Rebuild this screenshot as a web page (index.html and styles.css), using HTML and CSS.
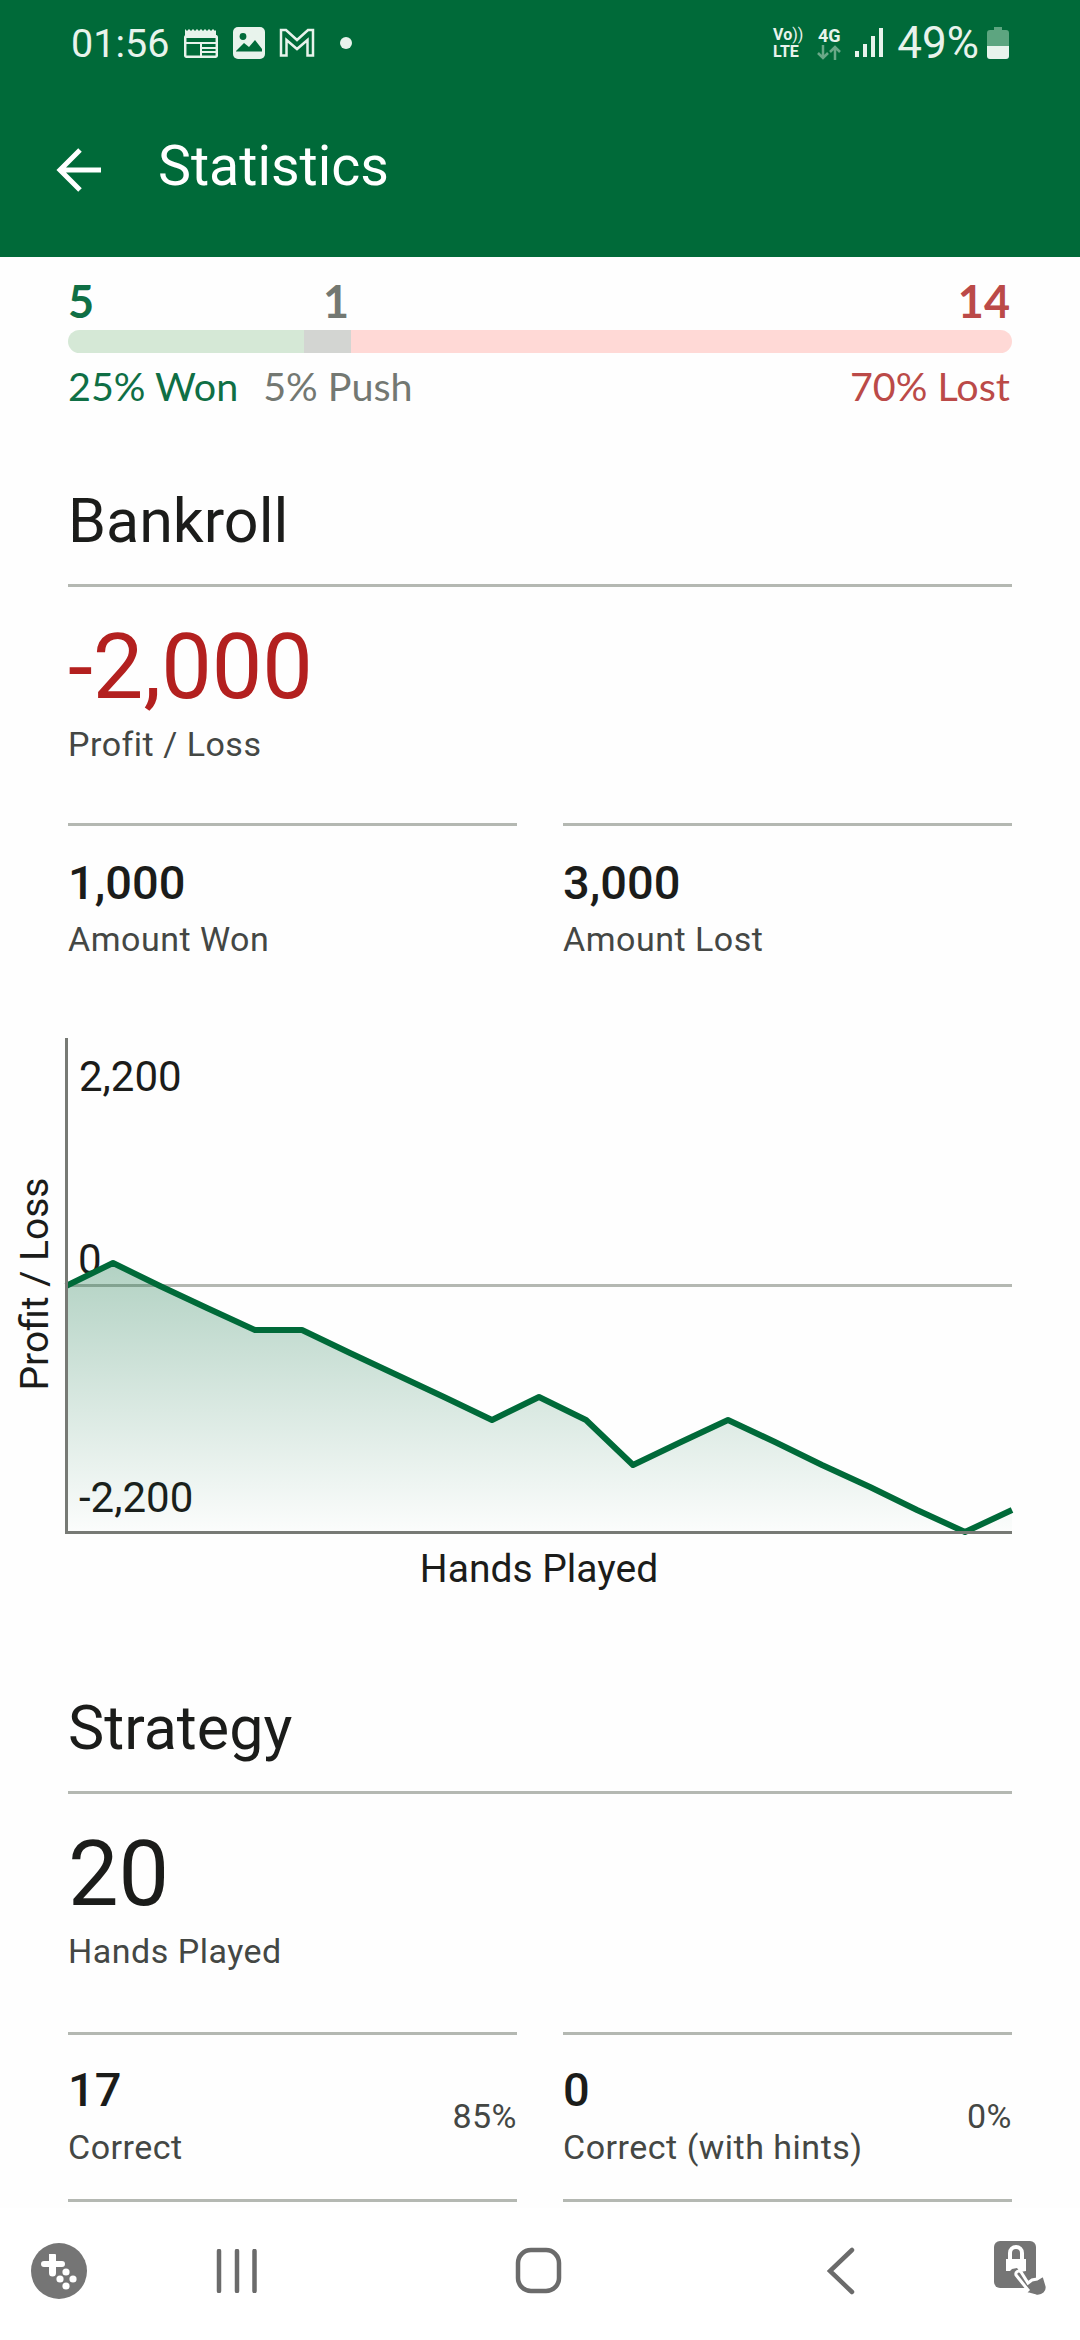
FILE: index.html
```html
<!DOCTYPE html>
<html lang="en">
<head>
    <meta charset="UTF-8">
    <meta name="viewport" content="width=device-width, initial-scale=1.0">
    <title>Statistics</title>
    <link rel="stylesheet" href="styles.css">
</head>
<body>
    <header class="top-header">
        <div class="status-bar">
            <span class="status-time">01:56</span>
            <svg class="icon-calendar" viewBox="0 0 34 30" width="34" height="30">
                <path class="fill-light" d="M1 1l2 2 2-2 2 2 2-2 2 2 2-2 2 2 2-2 2 2 2-2 2 2 2-2 2 2 2-2 2 2 1-1v8H1z"/>
                <rect class="stroke-light" x="1.2" y="8" width="31.6" height="20.8" rx="1.5"/>
                <path class="fill-light" d="M1 14h32v2H1zM16 15h2v14h-2zM18 19h15v2H18zM18 23h15v2H18z"/>
            </svg>
            <svg class="icon-photo" viewBox="0 0 32 32" width="32" height="32">
                <rect class="fill-light" x="0" y="0" width="32" height="32" rx="5"/>
                <circle class="fill-green" cx="10" cy="9.500" r="3.400"/>
                <path class="fill-green" d="M3 24l8-8 5 4 6-7 7 9v2.500H3z"/>
            </svg>
            <svg class="icon-mail" viewBox="0 0 36 30" width="36" height="30">
                <path class="stroke-light" d="M2 27.500V2h5l11 10L29 2h5v25.500h-5.500V12L18 21 7.500 12v15.500z"/>
            </svg>
            <span class="status-dot"></span>
            <span class="status-spacer"></span>
            <span class="volte"><span class="volte-top">Vo<i>))</i></span><span>LTE</span></span>
            <span class="net">
                <span>4G</span>
                <svg viewBox="0 0 26 15" width="26" height="15">
                    <path class="arrow-dim" d="M7 0v13M2 8l5 5 5-5M19 15V2M14 7l5-5 5 5"/>
                </svg>
            </span>
            <svg class="icon-signal" viewBox="0 0 28 30" width="28" height="30">
                <path class="fill-light" d="M0 23h4v6H0zM8 16h4v13H8zM16 8h4v21h-4zM24 0h4v29h-4z"/>
            </svg>
            <span class="status-battery-text">49%</span>
            <svg class="icon-battery" viewBox="0 0 22 32" width="22" height="32">
                <path class="battery-dim" d="M7 0h8v3h4a3 3 0 0 1 3 3v14H0V6a3 3 0 0 1 3-3h4z"/>
                <path class="fill-light" d="M0 19h22v10a3 3 0 0 1-3 3H3a3 3 0 0 1-3-3z"/>
            </svg>
        </div>
        <div class="app-bar">
            <svg class="icon-back" viewBox="0 0 46 46" width="46" height="46">
                <path d="M45 23H5M24 3L4 23l20 20"/>
            </svg>
            <h1>Statistics</h1>
        </div>
    </header>

    <main class="content">
        <div class="result-counts">
            <span class="won">5</span>
            <span class="push">1</span>
            <span class="lost">14</span>
        </div>
        <div class="result-bar">
            <div class="bar-won"></div>
            <div class="bar-push"></div>
            <div class="bar-lost"></div>
        </div>
        <div class="result-labels">
            <span class="won">25% Won</span>
            <span class="push">5% Push</span>
            <span class="lost">70% Lost</span>
        </div>

        <section class="section section-first">
            <h2>Bankroll</h2>
            <div class="big-value negative">-2,000</div>
            <div class="stat-label big-label">Profit / Loss</div>
            <div class="stat-pair">
                <div class="stat-cell">
                    <div class="stat-text">
                        <div class="stat-value">1,000</div>
                        <div class="stat-label">Amount Won</div>
                    </div>
                </div>
                <div class="stat-cell">
                    <div class="stat-text">
                        <div class="stat-value">3,000</div>
                        <div class="stat-label">Amount Lost</div>
                    </div>
                </div>
            </div>
            <svg class="chart" viewBox="0 1030 1080 570" width="1080" height="570">
                <defs>
                    <linearGradient id="areaFade" gradientUnits="userSpaceOnUse" x1="0" y1="1263" x2="0" y2="1533">
                        <stop offset="0" stop-color="#006a39" stop-opacity="0.3"/>
                        <stop offset="1" stop-color="#006a39" stop-opacity="0.01"/>
                    </linearGradient>
                </defs>
                <rect class="zero-line" x="66" y="1284" width="946" height="3"/>
                <text class="chart-tick" x="79" y="1091">2,200</text>
                <text class="chart-tick" x="78" y="1274">0</text>
                <text class="chart-tick" x="79" y="1512">-2,200</text>
                <path fill="url(#areaFade)" d="M66 1286L113 1263L160 1286L207 1308L255 1330L302 1330L350 1353L397 1375L444 1397L492 1420L539 1397L586 1420L633 1465L681 1442L728 1420L775 1442L822 1465L870 1487L917 1510L965 1532L1012 1510V1533H66Z"/>
                <path class="profit-line" d="M66 1286L113 1263L160 1286L207 1308L255 1330L302 1330L350 1353L397 1375L444 1397L492 1420L539 1397L586 1420L633 1465L681 1442L728 1420L775 1442L822 1465L870 1487L917 1510L965 1532L1012 1510"/>
                <rect class="axis" x="65" y="1038" width="3" height="496"/>
                <rect class="axis" x="68" y="1531" width="944" height="3"/>
                <text class="chart-text" text-anchor="middle" transform="translate(48 1284) rotate(-90)">Profit / Loss</text>
                <text class="chart-text" text-anchor="middle" x="539" y="1582">Hands Played</text>
            </svg>
        </section>

        <section class="section section-second">
            <h2>Strategy</h2>
            <div class="big-value">20</div>
            <div class="stat-label big-label">Hands Played</div>
            <div class="stat-pair stat-pair-closed">
                <div class="stat-cell">
                    <div class="stat-text">
                        <div class="stat-value">17</div>
                        <div class="stat-label">Correct</div>
                    </div>
                    <div class="stat-label">85%</div>
                </div>
                <div class="stat-cell">
                    <div class="stat-text">
                        <div class="stat-value">0</div>
                        <div class="stat-label">Correct (with hints)</div>
                    </div>
                    <div class="stat-label">0%</div>
                </div>
            </div>
        </section>
    </main>

    <nav class="nav-bar">
        <svg class="nav-game" viewBox="0 0 56 56" width="56" height="56">
            <circle class="nav-fill" cx="28" cy="28" r="28"/>
            <path class="nav-white" d="M18 11h6a1 1 0 0 1 1 1v6h6a2 2 0 0 1 0 6h-6v6a3 3 0 0 1-7 0v-6h-5a3 3 0 0 1 0-6h5v-6z"/>
            <circle class="nav-white" cx="35" cy="29" r="3.600"/>
            <circle class="nav-white" cx="29" cy="36" r="3.600"/>
            <circle class="nav-white" cx="42" cy="36" r="3.600"/>
            <circle class="nav-white" cx="35" cy="43" r="3.600"/>
        </svg>
        <svg class="nav-menu" viewBox="0 0 42 44" width="42" height="44">
            <path class="nav-stroke" d="M3 2v40M21 2v40M38.500 2v40"/>
        </svg>
        <svg class="nav-home" viewBox="0 0 48 48" width="48" height="48">
            <rect class="nav-stroke" x="4" y="3" width="41" height="41" rx="13"/>
        </svg>
        <svg class="nav-return" viewBox="0 0 28 48" width="28" height="48">
            <path class="nav-stroke" d="M25 3L3 24l22 21"/>
        </svg>
        <svg class="nav-lock" viewBox="0 0 58 58" width="58" height="58">
            <rect class="nav-fill" x="2" y="1" width="42" height="47" rx="6"/>
            <path class="nav-shackle" d="M18 20v-7a6 6 0 0 1 12 0v7"/>
            <path class="nav-white" d="M14 19h20v12l-6 1-3-4-5 1-2 2h-4z"/>
            <path class="nav-fill nav-hand" d="M24 35a3 3 0 0 1 5-3l7 11 4-3 5-1 5-3 2 0 3 10c1 6-4 11-11 10l-11-3 3-3z"/>
        </svg>
    </nav>
</body>
</html>
```

FILE: styles.css
```css
body {
    margin: 0;
    width: 1080px;
    height: 2340px;
    overflow: hidden;
    display: flex;
    flex-direction: column;
    background: #fefefe;
    font-family: Roboto, sans-serif;
    color: #1b1c1a;
}
.top-header {
    height: 257px;
    background: #006a39;
    flex-shrink: 0;
}
.status-bar {
    height: 86px;
    padding: 0 71px 0 71px;
    display: flex;
    align-items: center;
    color: #e8f3ec;
}
.status-time {
    font-size: 39.5px;
    margin-right: 15px;
}
.icon-photo {
    margin-left: 15px;
}
.icon-mail {
    margin-left: 14px;
}
.status-dot {
    width: 12px;
    height: 12px;
    margin-left: 25px;
    border-radius: 50%;
    background: #e8f3ec;
}
.status-spacer {
    flex: 1;
}
.volte {
    display: flex;
    flex-direction: column;
    font-size: 16px;
    font-weight: 700;
    line-height: 17px;
    margin-right: 13px;
}
.volte-top i {
    font-style: normal;
    font-weight: 400;
}
.net {
    display: flex;
    flex-direction: column;
    align-items: center;
    font-size: 18px;
    font-weight: 700;
    line-height: 18px;
    margin-right: 13px;
}
.icon-signal {
    margin-right: 14px;
}
.status-battery-text {
    font-size: 44px;
    margin-right: 8px;
}
.fill-light {
    fill: #e8f3ec;
}
.fill-green {
    fill: #006a39;
}
.stroke-light {
    fill: none;
    stroke: #e8f3ec;
    stroke-width: 2.5;
}
.arrow-dim {
    fill: none;
    stroke: #6aa888;
    stroke-width: 2.5;
}
.battery-dim {
    fill: #5da580;
}
.app-bar {
    height: 171px;
    padding-left: 56px;
    display: flex;
    align-items: center;
    color: #fff;
}
.icon-back {
    margin-bottom: 3px;
}
.icon-back path {
    fill: none;
    stroke: #fff;
    stroke-width: 5;
}
.app-bar h1 {
    margin: 0 0 11px 56px;
    font-size: 55.5px;
    font-weight: 400;
}
.content {
    flex: 1;
    min-height: 0;
    overflow: hidden;
    padding: 0 68px;
}
.result-counts {
    display: grid;
    grid-template-columns: 25% 5% 70%;
    padding-top: 15px;
    font-family: Lato, sans-serif;
    font-size: 45px;
    font-weight: 700;
    line-height: 58px;
}
.result-counts .push,
.result-counts .lost {
    text-align: right;
    padding-right: 2px;
}
.result-bar {
    display: flex;
    height: 23px;
    border-radius: 12px;
    overflow: hidden;
}
.bar-won {
    width: 25%;
    background: #d5e8d6;
}
.bar-push {
    width: 5%;
    background: #d3d5d2;
}
.bar-lost {
    width: 70%;
    background: #ffd9d6;
}
.result-labels {
    display: flex;
    gap: 25px;
    margin-top: 8px;
    padding: 0 2px 0 0;
    font-family: Lato, sans-serif;
    font-size: 39.5px;
    line-height: 50px;
}
.result-labels .lost {
    margin-left: auto;
}
.won {
    color: #0f6f45;
}
.push {
    color: #737872;
}
.lost {
    color: #bb4a48;
}
.section h2 {
    margin: 0;
    padding-bottom: 29px;
    border-bottom: 3px solid #b4b8b2;
    font-size: 61px;
    font-weight: 400;
    line-height: 67px;
}
.section-first {
    margin-top: 77px;
}
.section-second {
    margin-top: 95px;
}
.big-value {
    margin-top: 31px;
    font-size: 90px;
    line-height: 100px;
}
.negative {
    color: #b3201f;
}
.stat-label {
    font-size: 34px;
    line-height: 40px;
    color: #444744;
    letter-spacing: 0.5px;
}
.big-label {
    margin-top: 6px;
}
.stat-pair {
    display: grid;
    grid-template-columns: 1fr 1fr;
    gap: 46px;
    margin-top: 59px;
}
.stat-cell {
    display: flex;
    justify-content: space-between;
    align-items: center;
    padding-top: 32px;
    padding-bottom: 9px;
    border-top: 3px solid #b4b8b2;
}
.stat-pair-closed {
    margin-top: 61px;
}
.stat-pair-closed .stat-cell {
    padding-top: 30px;
    padding-bottom: 32px;
    border-bottom: 3px solid #b4b8b2;
}
.stat-value {
    font-size: 47px;
    font-weight: 500;
    line-height: 50px;
}
.stat-text .stat-label {
    margin-top: 11px;
}
.stat-pair-closed .stat-text .stat-label {
    margin-top: 12px;
}
.chart {
    display: block;
    margin: 62px -68px 0;
}
.zero-line {
    fill: #b4b8b2;
}
.axis {
    fill: #777a75;
}
.chart-text,
.chart-tick {
    font-family: Roboto, sans-serif;
    font-size: 39px;
    fill: #1b1c1a;
}
.chart-tick {
    font-size: 42px;
}
.profit-line {
    fill: none;
    stroke: #006a39;
    stroke-width: 6;
    stroke-linejoin: round;
}
.nav-bar {
    height: 126px;
    flex-shrink: 0;
    padding: 0 0 6px 31px;
    display: flex;
    align-items: center;
    background: #fff;
}
.nav-menu {
    margin-left: 129px;
}
.nav-home {
    margin-left: 256px;
}
.nav-return {
    margin-left: 265px;
}
.nav-lock {
    margin: 0 0 4px 137px;
}
.nav-fill {
    fill: #757575;
}
.nav-white {
    fill: #fff;
}
.nav-shackle {
    fill: none;
    stroke: #fff;
    stroke-width: 4;
}
.nav-hand {
    stroke: #fff;
    stroke-width: 3;
}
.nav-stroke {
    fill: none;
    stroke: #6b6b6b;
    stroke-width: 4.5;
    stroke-linecap: round;
}
```
